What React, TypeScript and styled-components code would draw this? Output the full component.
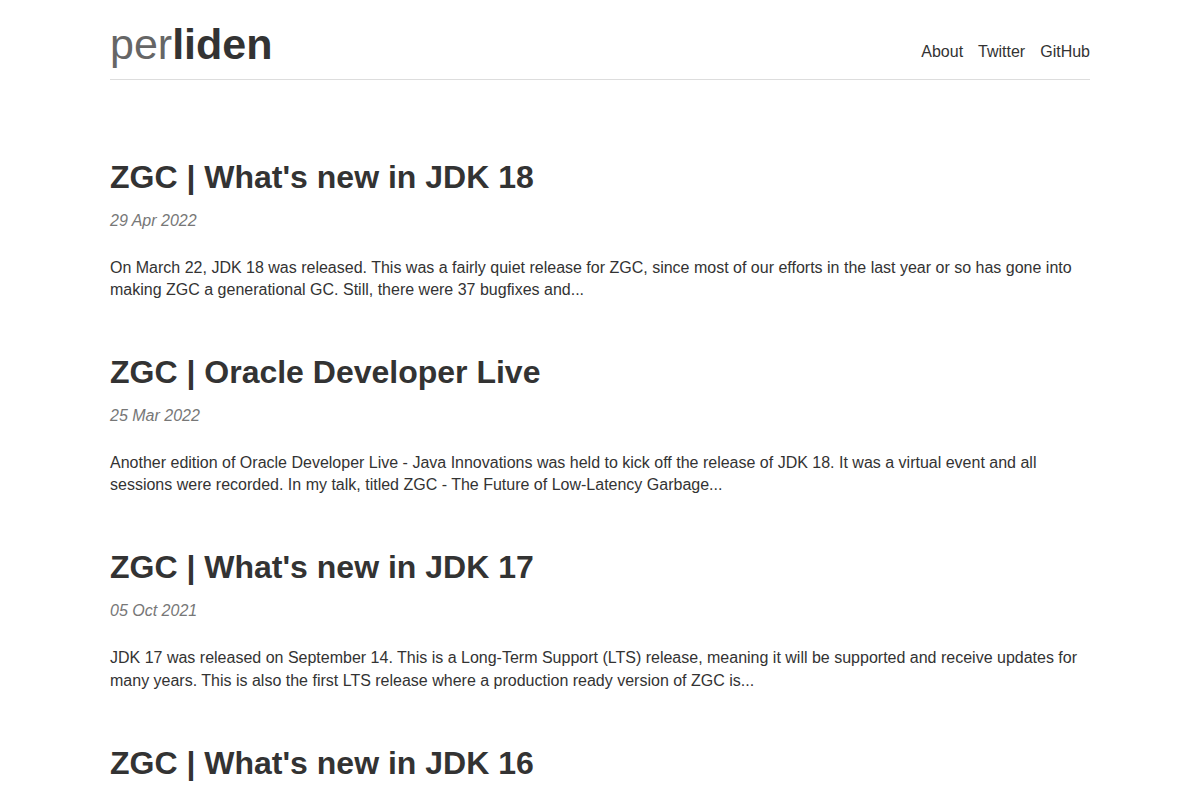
import React from "react";
import styled, { createGlobalStyle } from "styled-components";

const posts = [
  {
    title: "ZGC | What's new in JDK 18",
    date: "29 Apr 2022",
    excerpt:
      "On March 22, JDK 18 was released. This was a fairly quiet release for ZGC, since most of our efforts in the last year or so has gone into making ZGC a generational GC. Still, there were 37 bugfixes and...",
  },
  {
    title: "ZGC | Oracle Developer Live",
    date: "25 Mar 2022",
    excerpt:
      "Another edition of Oracle Developer Live - Java Innovations was held to kick off the release of JDK 18. It was a virtual event and all sessions were recorded. In my talk, titled ZGC - The Future of Low-Latency Garbage...",
  },
  {
    title: "ZGC | What's new in JDK 17",
    date: "05 Oct 2021",
    excerpt:
      "JDK 17 was released on September 14. This is a Long-Term Support (LTS) release, meaning it will be supported and receive updates for many years. This is also the first LTS release where a production ready version of ZGC is...",
  },
  {
    title: "ZGC | What's new in JDK 16",
    date: "03 Mar 2021",
    excerpt:
      "JDK 16 was released on March 16. Like previous releases, this one contains a number of new ZGC features, enhancements and bugfixes. Most notably, ZGC now does concurrent thread-stack processing...",
  },
];

const App = () => {
  return (
    <>
      <GlobalStyle />
      <Wrap>
        <Header>
          <Logo href="#">
            <Light>per</Light>
            <Bold>liden</Bold>
          </Logo>
          <Nav>
            <NavLink href="#">About</NavLink>
            <NavLink href="#">Twitter</NavLink>
            <NavLink href="#">GitHub</NavLink>
          </Nav>
        </Header>
        <PostList>
          {posts.map((post) => (
            <Post key={post.title}>
              <PostTitle>{post.title}</PostTitle>
              <PostDate>{post.date}</PostDate>
              <Excerpt>{post.excerpt}</Excerpt>
            </Post>
          ))}
        </PostList>
      </Wrap>
    </>
  );
};

export default App;

const GlobalStyle = createGlobalStyle`
  body {
    margin: 0;
    background: #fff;
    color: #333;
    font-family: "Liberation Sans", Arial, sans-serif;
  }
`;

const Wrap = styled.div`
  width: 980px;
  margin: 0 auto;
`;

const Header = styled.header`
  display: flex;
  justify-content: space-between;
  align-items: flex-end;
  padding-top: 19px;
  padding-bottom: 8px;
  border-bottom: 1px solid #ddd;
`;

const Logo = styled.a`
  font-size: 43px;
  line-height: 1.2;
  text-decoration: none;
`;

const Light = styled.span`
  color: #666;
  font-weight: 400;
`;

const Bold = styled.span`
  color: #333;
  font-weight: 700;
`;

const Nav = styled.nav`
  display: flex;
  gap: 15px;
  margin-bottom: 9px;
`;

const NavLink = styled.a`
  font-size: 16px;
  line-height: 1.15;
  color: #333;
  text-decoration: none;
`;

const PostList = styled.main`
  padding-top: 78px;
`;

const Post = styled.article`
  margin-bottom: 51.7px;
`;

const PostTitle = styled.h2`
  margin: 0;
  font-size: 32px;
  line-height: 1.2;
  font-weight: 700;
  color: #333;
`;

const PostDate = styled.p`
  margin: 13.6px 0 0;
  font-size: 16px;
  line-height: 1.4;
  font-style: italic;
  color: #777;
`;

const Excerpt = styled.p`
  margin: 24.6px 0 0;
  font-size: 16px;
  line-height: 1.4;
  color: #333;
`;
